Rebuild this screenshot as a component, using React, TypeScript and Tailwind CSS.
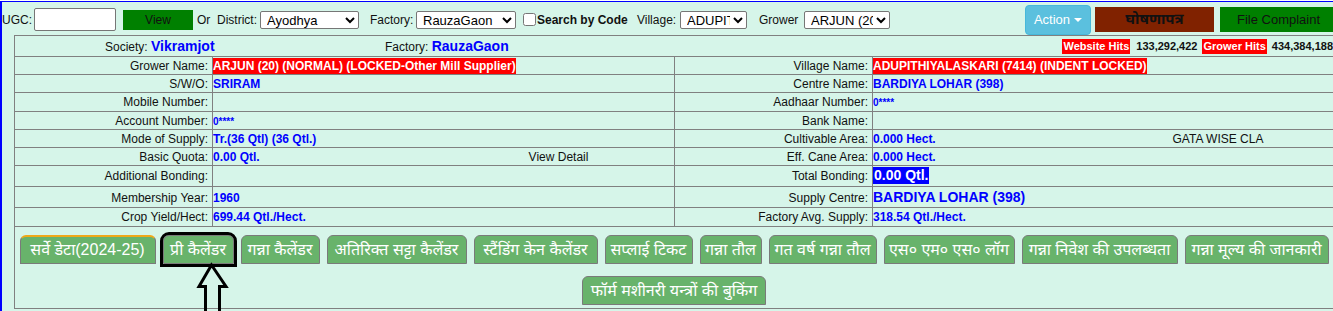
import React from 'react'

const base = "font-['Liberation_Sans',Arial,'Noto_Sans_Devanagari','Nirmala_UI',Mangal,sans-serif]"

const Red = ({ children }: { children: React.ReactNode }) => (
	<span className="inline-block bg-[#ff0000] text-white font-bold leading-[16px]">{children}</span>
)

const Val = ({ children, big }: { children: React.ReactNode, big?: boolean }) => (
	<span className={big ? 'font-bold text-[14px] text-[#0000ff]' : 'font-bold text-[#0000ff]'}>{children}</span>
)

type Row = {
	label: string
	value?: React.ReactNode
	extra?: string
	label2: string
	value2?: React.ReactNode
	extra2?: string
	h: string
}

const rows: Row[] = [
	{ label: 'Grower Name:', value: <Red>ARJUN (20) (NORMAL) (LOCKED-Other Mill Supplier)</Red>, label2: 'Village Name:', value2: <Red>ADUPITHIYALASKARI (7414) (INDENT LOCKED)</Red>, h: 'h-[18px]' },
	{ label: 'S/W/O:', value: <Val>SRIRAM</Val>, label2: 'Centre Name:', value2: <Val>BARDIYA LOHAR (398)</Val>, h: 'h-[18px]' },
	{ label: 'Mobile Number:', label2: 'Aadhaar Number:', value2: <Val><span className="text-[10px]">0****</span></Val>, h: 'h-[19px]' },
	{ label: 'Account Number:', value: <Val><span className="text-[10px]">0****</span></Val>, label2: 'Bank Name:', h: 'h-[18px]' },
	{ label: 'Mode of Supply:', value: <Val>Tr.(36 Qtl) (36 Qtl.)</Val>, label2: 'Cultivable Area:', value2: <Val>0.000 Hect.</Val>, extra2: 'GATA WISE CLA', h: 'h-[18px]' },
	{ label: 'Basic Quota:', value: <Val>0.00 Qtl.</Val>, extra: 'View Detail', label2: 'Eff. Cane Area:', value2: <Val>0.000 Hect.</Val>, h: 'h-[18px]' },
	{ label: 'Additional Bonding:', label2: 'Total Bonding:', value2: <span className="inline-block bg-[#0000ff] text-white font-bold text-[14px] leading-[17px] px-px">0.00 Qtl.</span>, h: 'h-[21px]' },
	{ label: 'Membership Year:', value: <Val>1960</Val>, label2: 'Supply Centre:', value2: <Val big>BARDIYA LOHAR (398)</Val>, h: 'h-[21px]' },
	{ label: 'Crop Yield/Hect:', value: <Val>699.44 Qtl./Hect.</Val>, label2: 'Factory Avg. Supply:', value2: <Val>318.54 Qtl./Hect.</Val>, h: 'h-[19px]' },
]

const tabs = [
	{ text: 'सर्वे डेटा(2024-25)', w: 'w-[136px]', active: true },
	{ text: 'प्री कैलेंडर', w: 'w-[71px]', marked: true },
	{ text: 'गन्ना कैलेंडर', w: 'w-[79px]' },
	{ text: 'अतिरिक्त सट्टा कैलेंडर', w: 'w-[140px]' },
	{ text: 'स्टैंडिंग केन कैलेंडर', w: 'w-[124px]' },
	{ text: 'सप्लाई टिकट', w: 'w-[88px]' },
	{ text: 'गन्ना तौल', w: 'w-[62px]' },
	{ text: 'गत वर्ष गन्ना तौल', w: 'w-[108px]' },
	{ text: 'एस० एम० एस० लॉग', w: 'w-[131px]' },
	{ text: 'गन्ना निवेश की उपलब्धता', w: 'w-[156px]' },
	{ text: 'गन्ना मूल्य की जानकारी', w: 'w-[144px]' },
	{ text: 'फॉर्म मशीनरी यन्त्रों की बुकिंग', w: 'w-[184px]' },
]

const Select = ({ value, w }: { value: string, w: string }) => (
	<select defaultValue={value} className={`${w} h-[18px] shrink-0 bg-white border border-[#767676] rounded-[2px] text-[13px] text-black pl-[2px]`}>
		<option>{value}</option>
	</select>
)

export default function App() {
	return (
		<div className={`${base} relative w-[1333px] h-[311px] overflow-hidden bg-white pt-px text-[12px] text-[#111]`}>
			<div className="h-[310px] bg-[#d6f5e9] border-t border-l-2 border-[#0000ff] overflow-hidden">
				{/* top filter bar */}
				<div className="flex items-center h-[33px] pt-[2px] whitespace-nowrap">
					<span className="w-[32px] shrink-0">UGC:</span>
					<input className="w-[82px] h-[23px] bg-white border border-[#767676] rounded-[2px] shrink-0" />
					<button className="ml-[7px] w-[70px] h-[20px] bg-[#008000] text-[#111] text-[12px] shrink-0">View</button>
					<span className="ml-[4px] w-[14px] shrink-0">Or</span>
					<span className="ml-[6px] w-[43px] shrink-0">District:</span>
					<Select value="Ayodhya" w="w-[99px]" />
					<span className="ml-[11px] w-[46px] shrink-0">Factory:</span>
					<Select value="RauzaGaon" w="w-[100px]" />
					<input type="checkbox" className="ml-[7px] w-[13px] h-[13px] shrink-0" />
					<span className="ml-px w-[91px] shrink-0 font-bold">Search by Code</span>
					<span className="ml-[9px] w-[43px] shrink-0">Village:</span>
					<Select value="ADUPIT" w="w-[67px]" />
					<span className="ml-[12px] w-[45px] shrink-0">Grower</span>
					<Select value="ARJUN (20)" w="w-[86px]" />
					<button className="ml-[135px] w-[66px] h-[30px] shrink-0 bg-[#5bc0de] border border-[#46b8da] rounded-[4px] text-white text-[13px] flex items-center justify-center gap-[4px]">
						Action
						<span className="w-0 h-0 border-x-[4px] border-x-transparent border-t-[4px] border-t-white" />
					</button>
					<button className="ml-[4px] w-[119px] h-[25px] shrink-0 bg-[#802200] text-[#111] text-[15px] font-bold">घोषणापत्र</button>
					<button className="ml-[6px] w-[117px] h-[25px] shrink-0 bg-[#008000] text-[#111] text-[13px]">File Complaint</button>
				</div>

				{/* grower detail table */}
				<div className="ml-[12px] w-[1320px] border border-[#808080]">
					<div className="flex items-center h-[21px] border-b border-[#808080] whitespace-nowrap">
						<div className="w-[370px] shrink-0 pl-[90px]">
							Society: <span className="font-bold text-[14px] text-[#0000ff]">Vikramjot</span>
						</div>
						<div className="shrink-0">
							Factory: <span className="font-bold text-[14px] text-[#0000ff]">RauzaGaon</span>
						</div>
						<div className="ml-auto flex items-center text-[11px]">
							<span className="bg-[#ff0000] text-white font-bold px-px leading-[15px]">Website Hits</span>
							<span className="ml-[6px] mr-[5px] font-bold">133,292,422</span>
							<span className="bg-[#ff0000] text-white font-bold px-px leading-[15px]">Grower Hits</span>
							<span className="ml-[5px] font-bold">434,384,188</span>
						</div>
					</div>

					{rows.map((r) => (
						<div key={r.label} className={`grid grid-cols-[198px_462px_198px_1fr] border-b border-[#808080] whitespace-nowrap ${r.h}`}>
							<div className="flex items-center justify-end pr-[4px] border-r border-[#808080]">{r.label}</div>
							<div className="flex items-center border-r border-[#808080]">
								<div className="w-[230px] shrink-0">{r.value}</div>
								<div className="flex-1 text-center">{r.extra}</div>
							</div>
							<div className="flex items-center justify-end pr-[4px] border-r border-[#808080]">{r.label2}</div>
							<div className="flex items-center">
								<div className="w-[230px] shrink-0">{r.value2}</div>
								<div className="flex-1 text-center">{r.extra2}</div>
							</div>
						</div>
					))}

					{/* menu tabs */}
					<div className="h-[81px] pt-[8px] flex flex-wrap justify-center content-start gap-x-[7px] gap-y-[12px]">
						{tabs.map((t) => (
							<button
								key={t.text}
								className={`${t.w} h-[29px] shrink-0 bg-[#68b36b] text-white text-[16px] whitespace-nowrap rounded-t-[6px] border border-[#7a7a7a] ${t.active ? 'border-t-2 border-t-[#f0a818]' : ''} ${t.marked ? 'outline-[3px] outline-black' : ''}`}
							>
								{t.text}
							</button>
						))}
					</div>
				</div>
			</div>

			{/* pointer arrow */}
			<svg className="absolute left-[196px] top-[262px]" width="34" height="52" viewBox="0 0 34 52" fill="none">
				<path d="M15.5 3 L3 24.5 L9.5 24.5 L9.5 51 L23.5 51 L23.5 24.5 L30 24.5 Z" stroke="black" strokeWidth="3" strokeLinejoin="miter" />
			</svg>
		</div>
	)
}
